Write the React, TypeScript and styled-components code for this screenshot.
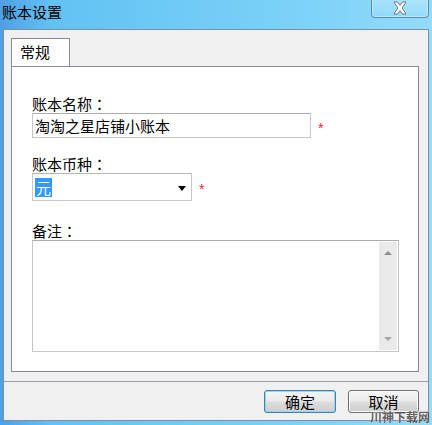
import React from "react";
import styled, { createGlobalStyle } from "styled-components";

const Global = createGlobalStyle`
  html, body { margin: 0; padding: 0; }
  body {
    font-family: "Noto Sans CJK SC", "Noto Sans", sans-serif;
    background: #ffffff;
  }
  * { box-sizing: border-box; }
`;

const Window = styled.div`
  position: relative;
  width: 432px;
  height: 425px;
  display: flex;
  flex-direction: column;
  background: linear-gradient(90deg, #4f9fe4 0%, #62c2f3 12%, #7cd2f8 70%, #93dcfa 100%);
  overflow: hidden;
`;

const TitleBar = styled.div`
  height: 29px;
  flex: none;
  display: flex;
  align-items: flex-start;
  justify-content: space-between;
  padding-left: 2px;
  padding-right: 3px;
`;

const Title = styled.div`
  font-size: 15px;
  line-height: 15px;
  margin-top: 4px;
  color: #000;
`;

const CloseButton = styled.div`
  width: 58px;
  height: 19px;
  margin-top: -1px;
  border: 1px solid #5f8bb3;
  border-top: none;
  border-radius: 0 0 4px 4px;
  background: linear-gradient(180deg, rgba(255,255,255,0.25), rgba(255,255,255,0.05));
  display: flex;
  align-items: center;
  justify-content: center;
  box-shadow: inset 0 0 0 1px rgba(255,255,255,0.35);
`;

const Body = styled.div`
  flex: 1;
  margin: 0 3px 4px 3px;
  border: 1px solid #7d8fa3;
  background: #f0f0f0;
  display: flex;
  flex-direction: column;
`;

const TabArea = styled.div`
  flex: 1;
  display: flex;
  flex-direction: column;
  padding: 8px 9px 9px 7px;
`;

const TabStrip = styled.div`
  display: flex;
  height: 28px;
  flex: none;
`;

const Tab = styled.div`
  width: 59px;
  height: 28px;
  border: 1px solid #898c95;
  border-bottom: none;
  background: #ffffff;
  font-size: 15px;
  line-height: 15px;
  padding: 5px 0 0 8px;
  position: relative;
  z-index: 1;
  margin-bottom: -1px;
`;

const Panel = styled.div`
  flex: 1;
  border: 1px solid #898c95;
  background: #ffffff;
  padding: 28px 0 0 20px;
  display: flex;
  flex-direction: column;
`;

const Label = styled.div<{ $gap?: number }>`
  font-size: 15px;
  line-height: 18px;
  height: 18px;
  color: #000;
  white-space: nowrap;
  margin-top: ${(p) => p.$gap ?? 0}px;
`;

const Colon = styled.span`
  font-family: "Noto Sans CJK TC", "Noto Sans CJK SC", sans-serif;
`;

const FieldRow = styled.div`
  display: flex;
  align-items: center;
  gap: 7px;
`;

const TextInput = styled.div`
  width: 279px;
  height: 25px;
  border: 1px solid #c7c7c7;
  border-top-color: #acacac;
  background: #fff;
  font-size: 15px;
  line-height: 23px;
  padding-left: 2px;
  white-space: nowrap;
`;

const Required = styled.span`
  color: #e8232f;
  font-family: "Liberation Sans", sans-serif;
  font-size: 14px;
  line-height: 10px;
  height: 8px;
  margin-top: 2px;
`;

const Select = styled.div`
  width: 160px;
  height: 28px;
  border: 1px solid #c9c9c9;
  border-top-color: #b5b5b5;
  background: #fff;
  display: flex;
  align-items: center;
  justify-content: space-between;
  padding: 0 5px 0 2px;
`;

const Selected = styled.span`
  background: #3399ff;
  color: #fff;
  font-size: 15px;
  line-height: 19px;
  height: 19px;
  padding: 0 1px;
`;

const Arrow = styled.span`
  width: 0;
  height: 0;
  border-left: 4px solid transparent;
  border-right: 4px solid transparent;
  border-top: 5px solid #000;
  margin-top: 2px;
`;

const TextArea = styled.div`
  width: 367px;
  height: 112px;
  border: 1px solid #c6c6c6;
  border-top-color: #acacac;
  background: #fff;
  display: flex;
  justify-content: flex-end;
  padding: 1px;
`;

const ScrollBar = styled.div`
  width: 18px;
  height: 100%;
  background: #eaeaea;
  display: flex;
  flex-direction: column;
  justify-content: space-between;
  align-items: center;
  padding: 9px 0 9px;
`;

const ScrollArrow = styled.span<{ $down?: boolean }>`
  width: 0;
  height: 0;
  border-left: 4px solid transparent;
  border-right: 4px solid transparent;
  ${(p) =>
    p.$down
      ? "border-top: 4px solid #a6a6a6;"
      : "border-bottom: 4px solid #8e8e8e;"}
`;

const Footer = styled.div`
  flex: none;
  height: 39px;
  border-top: 1px solid #a0a0a0;
  display: flex;
  justify-content: flex-end;
  gap: 12px;
  padding: 8px 9px 0 0;
`;

const Button = styled.div<{ $default?: boolean }>`
  width: ${(p) => (p.$default ? 72 : 71)}px;
  height: 23px;
  border: 1px solid ${(p) => (p.$default ? "#3c7fb1" : "#707070")};
  border-radius: 3px;
  background: linear-gradient(180deg, #f4f4f4 0%, #ebebeb 48%, #dddddd 52%, #cfcfcf 100%);
  box-shadow: inset 0 0 0 1px ${(p) => (p.$default ? "#9ed4f2" : "#fbfbfb")};
  display: flex;
  align-items: center;
  justify-content: center;
  font-size: 15px;
  line-height: 15px;
  color: #000;
`;

const Watermark = styled.div`
  position: absolute;
  right: 2px;
  bottom: 1px;
  font-size: 12px;
  line-height: 14px;
  height: 14px;
  font-weight: bold;
  color: #4a4a4a;
  text-shadow: 0 0 1px #fff, 0 0 1px #fff;
  opacity: 0.85;
  white-space: nowrap;
`;

export default function App() {
  return (
    <>
      <Global />
      <Window>
        <TitleBar>
          <Title>账本设置</Title>
          <CloseButton>
            <svg width="16" height="14" viewBox="0 0 16 14">
              <path
                d="M2 1 L5.5 1 L8 4.5 L10.5 1 L14 1 L10 7 L14 13 L10.5 13 L8 9.5 L5.5 13 L2 13 L6 7 Z"
                fill="#ffffff"
                stroke="#6b6b6b"
                strokeWidth="0.9"
                strokeLinejoin="round"
              />
            </svg>
          </CloseButton>
        </TitleBar>
        <Body>
          <TabArea>
            <TabStrip>
              <Tab>常规</Tab>
            </TabStrip>
            <Panel>
              <Label>账本名称<Colon>：</Colon></Label>
              <FieldRow>
                <TextInput>淘淘之星店铺小账本</TextInput>
                <Required>*</Required>
              </FieldRow>
              <Label $gap={17}>账本币种<Colon>：</Colon></Label>
              <FieldRow>
                <Select>
                  <Selected>元</Selected>
                  <Arrow />
                </Select>
                <Required>*</Required>
              </FieldRow>
              <Label $gap={21}>备注<Colon>：</Colon></Label>
              <TextArea>
                <ScrollBar>
                  <ScrollArrow />
                  <ScrollArrow $down />
                </ScrollBar>
              </TextArea>
            </Panel>
          </TabArea>
          <Footer>
            <Button $default>确定</Button>
            <Button>取消</Button>
          </Footer>
        </Body>
        <Watermark>川神下载网</Watermark>
      </Window>
    </>
  );
}
